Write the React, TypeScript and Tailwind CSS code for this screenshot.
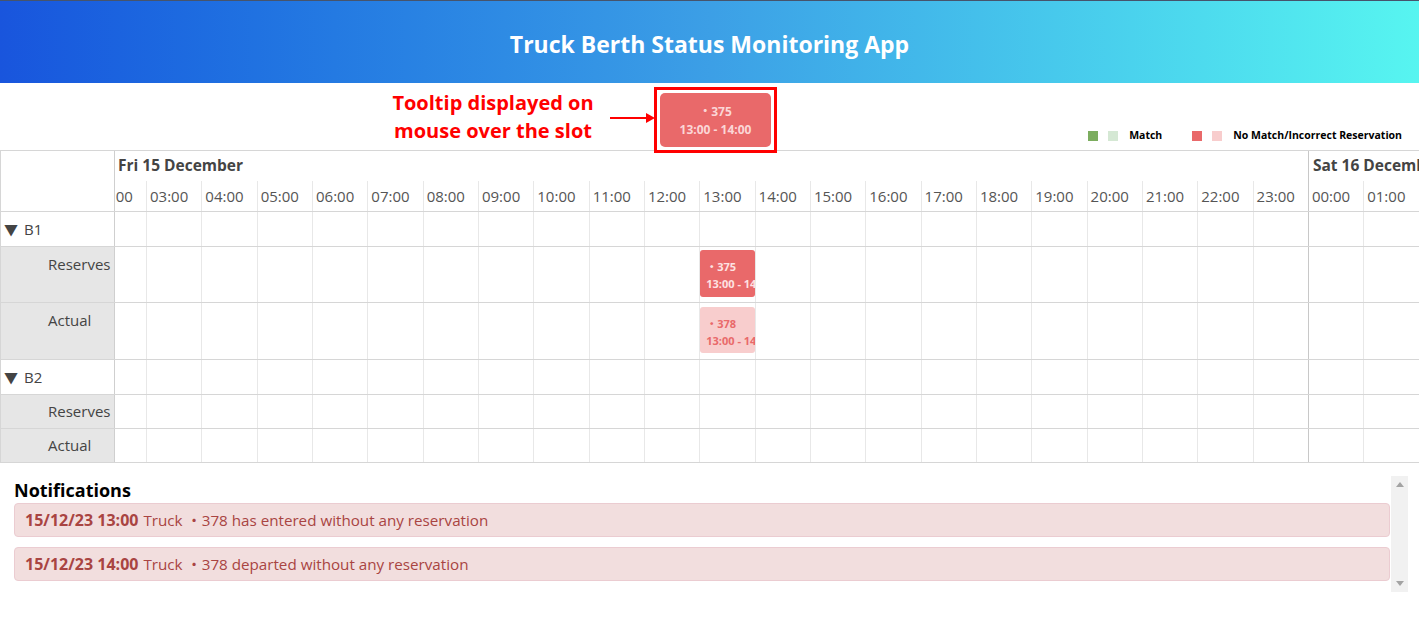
const HOURS: { label: string; day: "fri" | "sat" }[] = [
  ...Array.from({ length: 22 }, (_, i) => ({ label: `${String(i + 2).padStart(2, "0")}:00`, day: "fri" as const })),
  { label: "00:00", day: "sat" },
  { label: "01:00", day: "sat" },
  { label: "02:00", day: "sat" },
]

const font = "font-['Open_Sans','Noto_Sans_CJK_JP',sans-serif]"

const Cells = ({ children }: { children?: (label: string) => React.ReactNode }) => (
  <div className="flex h-full ml-[-23.33px]">
    {HOURS.map((h) => (
      <div
        key={h.day + h.label}
        className={
          "shrink-0 w-[55.33px] h-full border-r " +
          (h.day === "fri" && h.label === "23:00" ? "border-[#c8c8c8]" : "border-[#e8e8e8]")
        }
      >
        {children ? children(h.label) : null}
      </div>
    ))}
  </div>
)

const BerthRows = ({ name, tall }: { name: string; tall: boolean }) => {
  return (
    <>
      <div className="flex h-[35px] border-b border-[#d6d6d6]">
        <div className="w-[114px] shrink-0 border-r border-[#cfcfcf] flex items-center pl-[3px] text-[15px] text-[#444]">
          <span className="text-[14px] mr-[6px]">▼</span>
          {name}
        </div>
        <div className="flex-1 overflow-hidden">
          <Cells />
        </div>
      </div>
      <div className={"flex border-b border-[#d6d6d6] " + (tall ? "h-[56px]" : "h-[34px]")}>
        <div
          className={
            "w-[114px] shrink-0 border-r border-[#cfcfcf] bg-[#e6e6e6] flex pl-[47px] text-[15px] text-[#444] " +
            (tall ? "items-start pt-[6px]" : "items-center")
          }
        >
          Reserves
        </div>
        <div className="flex-1 overflow-hidden">
          {tall ? (
            <Cells>
              {(l) =>
                l === "13:00" ? (
                  <div className="pt-[3px]">
                    <div className="h-[47px] bg-[#e9696a] rounded-[3px] overflow-hidden whitespace-nowrap text-[11px] font-bold text-[#fde2e2] pl-[6px] pt-[8px] leading-[17px]">
                      <div>・375</div>
                      <div>13:00 - 14:00</div>
                    </div>
                  </div>
                ) : null
              }
            </Cells>
          ) : (
            <Cells />
          )}
        </div>
      </div>
      <div className={"flex border-b border-[#d6d6d6] " + (tall ? "h-[57px]" : "h-[34px]")}>
        <div
          className={
            "w-[114px] shrink-0 border-r border-[#cfcfcf] bg-[#e6e6e6] flex pl-[47px] text-[15px] text-[#444] " +
            (tall ? "items-start pt-[6px]" : "items-center")
          }
        >
          Actual
        </div>
        <div className="flex-1 overflow-hidden">
          {tall ? (
            <Cells>
              {(l) =>
                l === "13:00" ? (
                  <div className="pt-[4px]">
                    <div className="h-[46px] bg-[#f8cdcd] rounded-[3px] overflow-hidden whitespace-nowrap text-[11px] font-bold text-[#e9696a] pl-[6px] pt-[8px] leading-[17px]">
                      <div>・378</div>
                      <div>13:00 - 14:00</div>
                    </div>
                  </div>
                ) : null
              }
            </Cells>
          ) : (
            <Cells />
          )}
        </div>
      </div>
    </>
  )
}

export default function App() {
  return (
    <div className={"w-[1419px] h-[634px] bg-white overflow-hidden " + font}>
      {/* Header */}
      <header className="h-[83px] border-t border-[#46546c] bg-linear-to-r from-[#1955dd] via-[#3c9fe6] to-[#57f5f0] flex items-center justify-center pt-[4px]">
        <h1 className="text-white text-[23px] font-bold">Truck Berth Status Monitoring App</h1>
      </header>

      {/* Tooltip annotation + legend */}
      <div className="relative h-[67px] flex items-end justify-end pr-[17px]">
        <div className="absolute left-[378px] top-[6px] w-[230px] text-center text-[#ff0000] font-bold text-[20px] leading-[28px]">
          Tooltip displayed on
          <br />
          mouse over the slot
        </div>
        <svg className="absolute left-[610px] top-[29px]" width="46" height="12" viewBox="0 0 46 12">
          <line x1="0" y1="6" x2="38" y2="6" stroke="#ff0000" strokeWidth="2" />
          <polygon points="36,1 45,6 36,11" fill="#ff0000" />
        </svg>
        <div className="absolute z-10 left-[654px] top-[4px] w-[123px] h-[66px] border-[3px] border-[#ff0000] p-[3px] bg-white">
          <div className="h-full bg-[#e9696a] rounded-[5px] flex flex-col items-center justify-center text-[12px] font-bold text-[#fbd6d6] leading-[18px] pt-px">
            <div>・375</div>
            <div>13:00 - 14:00</div>
          </div>
        </div>

        <div className="flex items-center mb-[6px] text-[10.5px] font-bold text-black">
          <span className="w-[10px] h-[10px] bg-[#7cad5f]" />
          <span className="w-[10px] h-[10px] bg-[#d5e8d4] ml-[10px]" />
          <span className="ml-[11px]">Match</span>
          <span className="w-[10px] h-[10px] bg-[#e9696a] ml-[30px]" />
          <span className="w-[10px] h-[10px] bg-[#f8cdcd] ml-[10px]" />
          <span className="ml-[11px]">No Match/Incorrect Reservation</span>
        </div>
      </div>

      {/* Timeline */}
      <div className="border-t border-l border-[#d6d6d6]">
        <div className="flex h-[61px] border-b border-[#d6d6d6]">
          <div className="w-[114px] shrink-0 border-r border-[#cfcfcf]" />
          <div className="flex-1 overflow-hidden">
            <div className="ml-[-23.33px] flex flex-col h-full">
              <div className="flex h-[30px]">
                <div className="shrink-0 w-[1217.26px] border-r border-[#c8c8c8] pl-[26.33px] flex items-center text-[15.5px] font-bold text-[#444]">
                  Fri 15 December
                </div>
                <div className="shrink-0 pl-[4px] flex items-center text-[15.5px] font-bold text-[#444] whitespace-nowrap">
                  Sat 16 December
                </div>
              </div>
              <div className="flex h-[30px]">
                {HOURS.map((h) => (
                  <div
                    key={h.day + h.label}
                    className={
                      "shrink-0 w-[55.33px] h-full border-r flex items-center pl-[3px] text-[15px] text-[#555] " +
                      (h.day === "fri" && h.label === "23:00" ? "border-[#c8c8c8]" : "border-[#e8e8e8]")
                    }
                  >
                    {h.label}
                  </div>
                ))}
              </div>
            </div>
          </div>
        </div>
        <BerthRows name="B1" tall />
        <BerthRows name="B2" tall={false} />
      </div>

      {/* Notifications */}
      <div className="flex mt-[13px] ml-[14px] mr-[11px] h-[116px]">
        <div className="flex-1 pt-[2px]">
          <h2 className="text-[18px] font-bold text-black leading-[24px]">Notifications</h2>
          <div className="flex flex-col gap-[10px] mt-px">
            <div className="h-[34px] bg-[#f2dede] border border-[#ebccd1] rounded-[4px] flex items-center pl-[10px] text-[15.2px] text-[#a94442]">
              <span className="font-bold text-[16px]">15/12/23 13:00</span>
              <span className="ml-[5px]">Truck ・378 has entered without any reservation</span>
            </div>
            <div className="h-[34px] bg-[#f2dede] border border-[#ebccd1] rounded-[4px] flex items-center pl-[10px] text-[15.2px] text-[#a94442]">
              <span className="font-bold text-[16px]">15/12/23 14:00</span>
              <span className="ml-[5px]">Truck ・378 departed without any reservation</span>
            </div>
          </div>
        </div>
        <div className="w-[17px] ml-px bg-[#f1f1f1] flex flex-col items-center justify-between py-[6px]">
          <svg width="8" height="5" viewBox="0 0 8 5"><polygon points="0,5 4,0 8,5" fill="#a3a3a3" /></svg>
          <svg width="8" height="5" viewBox="0 0 8 5"><polygon points="0,0 8,0 4,5" fill="#a3a3a3" /></svg>
        </div>
      </div>
    </div>
  )
}
